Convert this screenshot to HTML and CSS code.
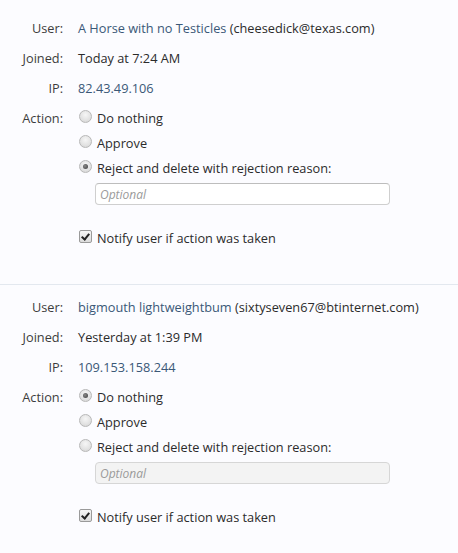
FILE: index.html
```html
<!DOCTYPE html>
<html>
<head>
<meta charset="utf-8">
<link rel="stylesheet" href="styles.css">
</head>
<body>
<div class="list">
  <div class="block">
    <div class="row">
      <div class="label">User:</div>
      <div class="value"><a class="link" href="#">A Horse with no Testicles</a> (cheesedick@texas.com)</div>
    </div>
    <div class="row">
      <div class="label">Joined:</div>
      <div class="value">Today at 7:24 AM</div>
    </div>
    <div class="row">
      <div class="label">IP:</div>
      <div class="value"><a class="link" href="#">82.43.49.106</a></div>
    </div>
    <div class="row">
      <div class="label">Action:</div>
      <div class="value">
        <ul class="options">
          <li><label class="opt"><input type="radio" name="a1" class="radio"><span>Do nothing</span></label></li>
          <li><label class="opt"><input type="radio" name="a1" class="radio"><span>Approve</span></label></li>
          <li><label class="opt"><input type="radio" name="a1" class="radio" checked><span>Reject and delete with rejection reason:</span></label></li>
        </ul>
        <input type="text" class="reason" placeholder="Optional">
        <label class="opt notify"><input type="checkbox" class="check" checked><span>Notify user if action was taken</span></label>
      </div>
    </div>
  </div>
  <div class="block">
    <div class="row">
      <div class="label">User:</div>
      <div class="value"><a class="link" href="#">bigmouth lightweightbum</a> (sixtyseven67@btinternet.com)</div>
    </div>
    <div class="row">
      <div class="label">Joined:</div>
      <div class="value">Yesterday at 1:39 PM</div>
    </div>
    <div class="row">
      <div class="label">IP:</div>
      <div class="value"><a class="link" href="#">109.153.158.244</a></div>
    </div>
    <div class="row">
      <div class="label">Action:</div>
      <div class="value">
        <ul class="options">
          <li><label class="opt"><input type="radio" name="a2" class="radio" checked><span>Do nothing</span></label></li>
          <li><label class="opt"><input type="radio" name="a2" class="radio"><span>Approve</span></label></li>
          <li><label class="opt"><input type="radio" name="a2" class="radio"><span>Reject and delete with rejection reason:</span></label></li>
        </ul>
        <input type="text" class="reason disabled" placeholder="Optional" disabled>
        <label class="opt notify"><input type="checkbox" class="check" checked><span>Notify user if action was taken</span></label>
      </div>
    </div>
  </div>
</div>
</body>
</html>
```

FILE: styles.css
```css
html, body {
  margin: 0;
  padding: 0;
  background: #fcfcff;
}
body {
  font-family: "Open Sans", "Liberation Sans", sans-serif;
  font-size: 12.75px;
  color: #2b2b2b;
}
.list {
  padding-top: 7px;
}
.block {
  padding: 12px 0 37px;
  border-bottom: 1px solid #e3e8ef;
}
.block + .block {
  padding-top: 13px;
}
.block:last-child {
  border-bottom: none;
}
.row {
  display: grid;
  grid-template-columns: 63px 1fr;
  column-gap: 15px;
  line-height: 18px;
  margin-bottom: 12px;
}
.row:last-child {
  margin-bottom: 0;
}
.label {
  text-align: right;
  color: #3c3c3c;
}
.link {
  color: #3a5877;
  text-decoration: none;
}
.options {
  list-style: none;
  margin: 0;
  padding: 0;
  display: flex;
  flex-direction: column;
  row-gap: 7px;
}
.opt {
  display: flex;
  align-items: center;
  line-height: 18px;
}
.radio, .check {
  -webkit-appearance: none;
  appearance: none;
  margin: 0 5px 0 1px;
  width: 13px;
  height: 13px;
  flex: none;
  position: relative;
  top: -2px;
}
.radio {
  border-radius: 50%;
  border: 1px solid #b8b8b8;
  background: radial-gradient(circle at 50% 35%, #f6f6f6 0%, #e2e2e2 60%, #d2d2d2 100%);
}
.radio:checked::after {
  content: "";
  position: absolute;
  left: 3px;
  top: 3px;
  width: 5px;
  height: 5px;
  border-radius: 50%;
  background: radial-gradient(circle at 40% 40%, #8a8a8a, #3a3a3a);
}
.check {
  border-radius: 2px;
  border: 1px solid #9a9a9a;
  background: linear-gradient(#f6f6f6, #dcdcdc);
}
.check:checked::after {
  content: "";
  position: absolute;
  left: 3px;
  top: 1px;
  width: 3px;
  height: 6px;
  border-right: 2px solid #222;
  border-bottom: 2px solid #222;
  transform: rotate(40deg);
}
.reason {
  display: block;
  box-sizing: border-box;
  margin: 6px 0 24px 17px;
  width: 295px;
  height: 22px;
  padding: 0 4px;
  border: 1px solid #cfcfcf;
  border-top-color: #bdbdbd;
  border-radius: 4px;
  background: #fff;
  font-family: inherit;
  font-size: 12px;
  outline: none;
}
.reason::placeholder {
  color: #9a9a9a;
  font-style: italic;
}
.reason.disabled {
  background: #f3f3f3;
  border-color: #d6d6d6;
}
```
